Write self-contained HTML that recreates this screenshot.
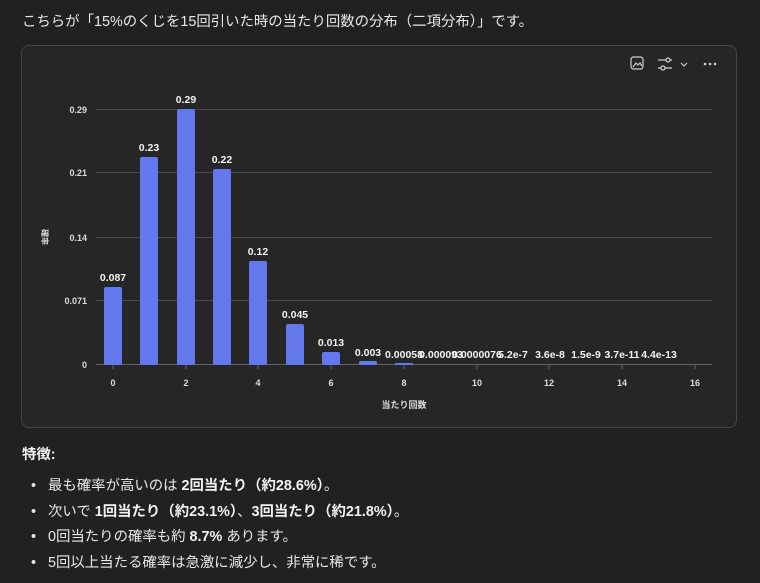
<!DOCTYPE html>
<html><head><meta charset="utf-8"><style>
html,body{margin:0;padding:0;background:#212121;width:760px;height:583px;overflow:hidden;font-family:"Liberation Sans","Noto Sans CJK JP",sans-serif;color:#e8e8e8}
.t{position:absolute;left:22px;font-size:14.4px;white-space:nowrap}
.card{position:absolute;left:21px;top:45px;width:714px;height:381px;background:#262626;border:1px solid #444;border-radius:8px}
li{position:absolute;left:30px;font-size:14.4px;line-height:20px;height:20px;white-space:nowrap;list-style:none}
li i{position:absolute;left:1px;top:0;font-style:normal;font-family:"Liberation Sans",sans-serif}
li span{position:absolute;left:18px;top:0}
b{font-weight:bold;color:#f2f2f2}
</style></head><body>
<div class="t" style="top:10px">こちらが「15%のくじを15回引いた時の当たり回数の分布（二項分布）」です。</div>
<div class="card"></div>
<svg style="position:absolute;left:0;top:0" width="760" height="583" font-family="Liberation Sans, Noto Sans CJK JP, sans-serif">
<g stroke="#4a4a4a" stroke-width="1">
<line x1="96" x2="712" y1="109.5" y2="109.5"/><line x1="96" x2="712" y1="172.5" y2="172.5"/><line x1="96" x2="712" y1="237.5" y2="237.5"/><line x1="96" x2="712" y1="300.5" y2="300.5"/>
<line x1="96" x2="712" y1="364.5" y2="364.5" stroke="#666"/>
</g>
<g stroke="#666"><line x1="113" x2="113" y1="365" y2="369"/><line x1="186" x2="186" y1="365" y2="369"/><line x1="258" x2="258" y1="365" y2="369"/><line x1="331" x2="331" y1="365" y2="369"/><line x1="404" x2="404" y1="365" y2="369"/><line x1="477" x2="477" y1="365" y2="369"/><line x1="549" x2="549" y1="365" y2="369"/><line x1="622" x2="622" y1="365" y2="369"/><line x1="695" x2="695" y1="365" y2="369"/></g>
<g fill="#6478ee">
<rect x="104" y="287" width="18" height="78" rx="2"/>
<rect x="140" y="157" width="18" height="208" rx="2"/>
<rect x="177" y="109" width="18" height="256" rx="2"/>
<rect x="213" y="169" width="18" height="196" rx="2"/>
<rect x="249" y="261" width="18" height="104" rx="2"/>
<rect x="286" y="324" width="18" height="41" rx="2"/>
<rect x="322" y="352" width="18" height="13" rx="2"/>
<rect x="359" y="361" width="18" height="4" rx="1"/>
<rect x="395" y="363" width="18" height="2"/>
</g>
<g fill="#f2f2f2" font-size="10.5" font-weight="bold" text-anchor="middle">
<text x="113" y="281">0.087</text><text x="149" y="151">0.23</text><text x="186" y="103">0.29</text><text x="222" y="163">0.22</text><text x="258" y="255">0.12</text><text x="295" y="318">0.045</text><text x="331" y="346">0.013</text><text x="368" y="356">0.003</text>
<text x="404" y="358">0.00058</text><text x="441" y="358">0.000093</text><text x="477" y="358">0.0000076</text><text x="513" y="358">5.2e-7</text><text x="550" y="358">3.6e-8</text><text x="586" y="358">1.5e-9</text><text x="622" y="358">3.7e-11</text><text x="659" y="358">4.4e-13</text>
</g>
<g fill="#dcdcdc" font-size="9" font-weight="bold" text-anchor="end">
<text x="87" y="113">0.29</text><text x="87" y="176">0.21</text><text x="87" y="241">0.14</text><text x="87" y="304">0.071</text><text x="87" y="368">0</text>
</g>
<g fill="#dcdcdc" font-size="9" font-weight="bold" text-anchor="middle">
<text x="113" y="386">0</text><text x="186" y="386">2</text><text x="258" y="386">4</text><text x="331" y="386">6</text><text x="404" y="386">8</text><text x="477" y="386">10</text><text x="549" y="386">12</text><text x="622" y="386">14</text><text x="695" y="386">16</text>
<text x="404" y="408">当たり回数</text>
<text x="0" y="0" transform="translate(42,237) rotate(90)" font-size="8">確率</text>
</g>
<g stroke="#d0d0d0" fill="none" stroke-width="1.2">
<rect x="631" y="57" width="12" height="12" rx="2.5"/><path d="M633 67l3-4 2 2 2-2 2 3"/>
<path d="M658 60h14M658 68h14"/><circle cx="668" cy="60" r="2" fill="#262626"/><circle cx="663" cy="68" r="2" fill="#262626"/>
<path d="M681 63l3 3 3-3"/>
</g>
<g fill="#d0d0d0"><circle cx="705" cy="64" r="1.3"/><circle cx="710" cy="64" r="1.3"/><circle cx="715" cy="64" r="1.3"/></g>
</svg>
<div class="t" style="top:443px"><b>特徴:</b></div>
<ul style="margin:0;padding:0">
<li style="top:476px"><i>•</i><span>最も確率が高いのは <b>2回当たり（約28.6%）</b>。</span></li>
<li style="top:502px"><i>•</i><span>次いで <b>1回当たり（約23.1%）</b>、<b>3回当たり（約21.8%）</b>。</span></li>
<li style="top:527px"><i>•</i><span>0回当たりの確率も約 <b>8.7%</b> あります。</span></li>
<li style="top:553px"><i>•</i><span>5回以上当たる確率は急激に減少し、非常に稀です。</span></li>
</ul>
</body></html>
